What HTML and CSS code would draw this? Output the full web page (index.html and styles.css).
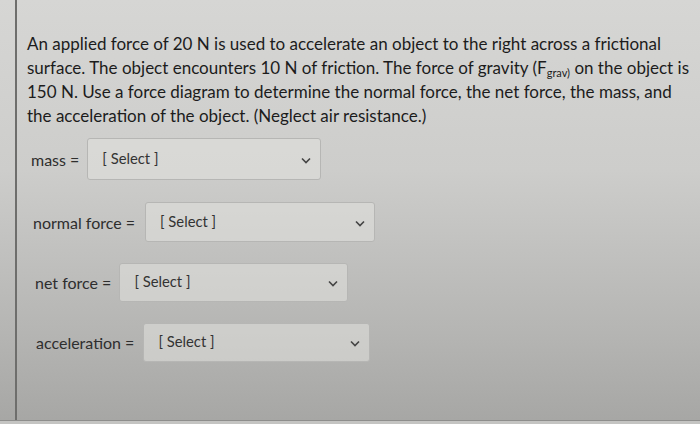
FILE: index.html
```
<!DOCTYPE html>
<html lang="en">
<head>
    <meta charset="UTF-8">
    <meta name="viewport" content="width=device-width, initial-scale=1.0">
    <title>Question</title>
    <link rel="stylesheet" href="styles.css">
</head>
<body>
    <div class="screen">
        <div class="panel">
            <p class="question">An applied force of 20 N is used to accelerate an object to the right across a frictional surface. The object encounters 10 N of friction. The force of gravity (F<sub>grav)</sub> on the object is 150 N. Use a force diagram to determine the normal force, the net force, the mass, and the acceleration of the object. (Neglect air resistance.)</p>

            <div class="row row-mass">
                <span class="label">mass =</span>
                <div class="select w-mass">
                    <span>[ Select ]</span>
                    <svg class="chev" width="10" height="7" viewBox="0 0 10 7"><path d="M1 1.5 L5 5.5 L9 1.5" fill="none" stroke="#444" stroke-width="1.6"/></svg>
                </div>
            </div>
            <div class="row row-normal">
                <span class="label">normal force =</span>
                <div class="select w-normal">
                    <span>[ Select ]</span>
                    <svg class="chev" width="10" height="7" viewBox="0 0 10 7"><path d="M1 1.5 L5 5.5 L9 1.5" fill="none" stroke="#444" stroke-width="1.6"/></svg>
                </div>
            </div>
            <div class="row row-net">
                <span class="label">net force =</span>
                <div class="select w-net">
                    <span>[ Select ]</span>
                    <svg class="chev" width="10" height="7" viewBox="0 0 10 7"><path d="M1 1.5 L5 5.5 L9 1.5" fill="none" stroke="#444" stroke-width="1.6"/></svg>
                </div>
            </div>
            <div class="row row-acc">
                <span class="label">acceleration =</span>
                <div class="select w-acc">
                    <span>[ Select ]</span>
                    <svg class="chev" width="10" height="7" viewBox="0 0 10 7"><path d="M1 1.5 L5 5.5 L9 1.5" fill="none" stroke="#444" stroke-width="1.6"/></svg>
                </div>
            </div>
        </div>
        <div class="bottom-edge"></div>
    </div>
</body>
</html>
```

FILE: styles.css
```
body {
    margin: 0;
    font-family: Lato, "Open Sans", sans-serif;
    color: #262626;
}

.screen {
    width: 700px;
    height: 424px;
    display: flex;
    flex-direction: column;
    background: linear-gradient(180deg, #d6d6d4 0%, #cdcdcb 40%, #b4b4b2 80%, #a6a6a4 100%);
}

.panel {
    flex: 1;
    margin-left: 15px;
    border-left: 2px solid #6e6e6c;
    padding: 32px 0 0 10px;
}

.question {
    margin: 0 0 10px;
    width: 672px;
    font-size: 17px;
    line-height: 24px;
    color: #1c1c1c;
}

.question sub {
    font-size: 11px;
    vertical-align: -3px;
    line-height: 0;
}

.row {
    display: flex;
    align-items: center;
    height: 42px;
}

.row-mass { margin-left: 4px; }
.row-normal { margin-top: 21px; margin-left: 6px; }
.row-net { margin-top: 18px; margin-left: 8px; }
.row-acc { margin-top: 18px; margin-left: 9px; }

.label {
    font-size: 16px;
    color: #2e2e2e;
    margin-right: 8px;
}

.row-mass .label { margin-right: 8px; }
.row-normal .label { margin-right: 10px; }
.row-acc .label { margin-right: 9px; }

.select {
    box-sizing: border-box;
    border: 1px solid #b6b6b4;
    border-radius: 3px;
    background: rgba(225, 225, 223, 0.55);
    display: flex;
    align-items: center;
    justify-content: space-between;
    padding: 0 9px 3px 14px;
    font-size: 14.8px;
    color: #333;
}

.w-mass { width: 234px; height: 42px; }
.w-normal { width: 230px; height: 40px; }
.w-net { width: 229px; height: 39px; }
.w-acc { width: 227px; height: 39px; }

.chev {
    margin-top: 5px;
}

.bottom-edge {
    height: 3px;
    background: #c4c4c2;
    border-top: 1px solid #8e8e8c;
}
```
